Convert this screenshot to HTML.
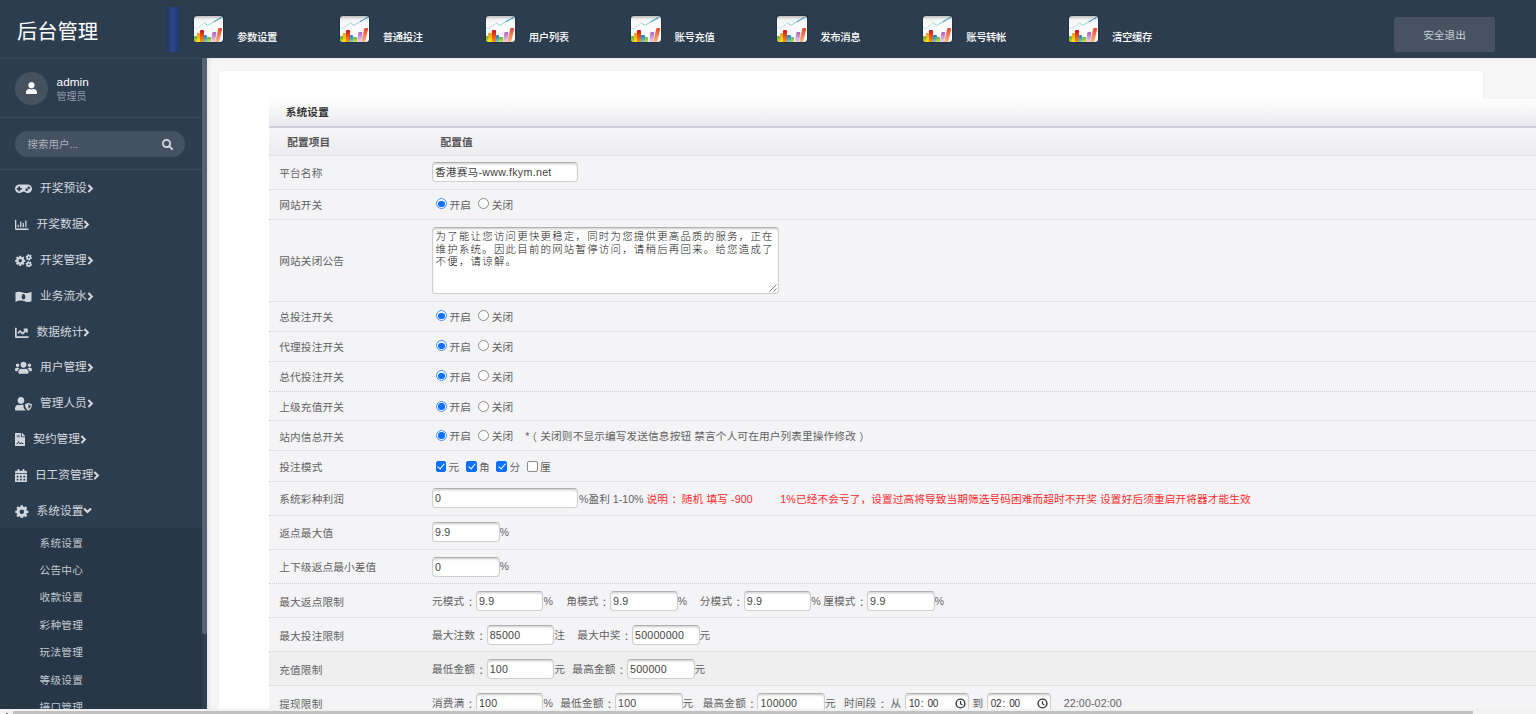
<!DOCTYPE html>
<html lang="zh-CN">
<head>
<meta charset="utf-8">
<title>后台管理</title>
<style>
*{box-sizing:border-box;margin:0;padding:0}
html,body{width:1536px;height:714px;overflow:hidden}
body{position:relative;background:#f6f6f7;font-family:"Liberation Sans","Noto Sans CJK SC",sans-serif;font-size:10.67px;color:#555}
/* ---------- header ---------- */
#hdr{position:absolute;left:0;top:0;width:1536px;height:58px;background:#2d3d50;z-index:5}
#brand{position:absolute;left:17px;top:17px;font-size:20.3px;line-height:30px;color:#fff;white-space:nowrap}
#bluebar{position:absolute;left:166.5px;top:6.5px;width:12.5px;height:45.5px;background:linear-gradient(90deg,#1d3565 0%,#2a4a86 45%,#1f3a70 100%)}
.tn{position:absolute;top:13.8px;height:30px;white-space:nowrap}
.ic{position:absolute;left:2px;top:2px;width:29.2px;height:26.2px;border-radius:3.2px;overflow:hidden;background:linear-gradient(#bdbdbd 0,#f3f3f3 14%,#fbfbfb 30%,#fafafa 100%);box-shadow:0 0 0 1.1px rgba(30,44,62,.55)}
.ic svg{position:absolute;left:0;top:0}
.ic i{position:absolute;bottom:-1px;border-radius:1.2px 1.2px 0 0}
.ic .b1{left:0;width:2.9px;height:6.9px;background:linear-gradient(#4fa63c,#e9e21e)}
.ic .b2{left:2.7px;width:3.4px;height:10.1px;background:linear-gradient(#f2931e,#fff200)}
.ic .b3{left:5.9px;width:4.1px;height:12.7px;background:linear-gradient(#d40f18,#f6a01e)}
.ic .b4{left:10px;width:3.4px;height:8.2px;background:linear-gradient(#1674c4,#7fe0cf)}
.ic .b5{left:13.3px;width:3.7px;height:6.1px;background:linear-gradient(#52b043,#f4ea3a)}
.ic .b6{left:17.3px;width:3.5px;height:11.2px;background:linear-gradient(#ae5fbd,#f6dcec);transform:skewX(-7deg);transform-origin:50% 100%}
.ic .b7{left:21.3px;width:4.2px;height:15.2px;background:linear-gradient(#e6452a,#fbc08c);transform:skewX(-12.5deg);transform-origin:50% 100%}
.tn span{position:absolute;left:45px;top:17px;font-size:10.4px;line-height:14px;font-weight:500;color:#fff;letter-spacing:-.4px}
#logout{position:absolute;left:1394px;top:17px;width:101px;height:35px;border-radius:3px;background:#475363;color:#c9ced6;font-size:10.67px;line-height:37px;text-align:center}
/* ---------- sidebar ---------- */
#side{position:absolute;left:0;top:58px;width:201.6px;height:651px;background:#2d3d50;overflow:hidden;z-index:4}
#sbar{position:absolute;left:201.6px;top:58px;width:5px;height:651px;background:#2f3e51;z-index:4}
#sbar i{position:absolute;left:0;top:0;width:5px;height:576px;background:#566276;border-radius:0 0 2px 2px}
#user{position:absolute;left:0;top:0;width:202px;height:60px;border-top:1px solid #364659;border-bottom:1px solid #3c4b5d}
#ava{position:absolute;left:15px;top:13px;width:33px;height:33px;border-radius:50%;background:#46525f}
#uname{position:absolute;left:56.6px;top:16px;font-size:11.8px;line-height:14px;color:#fff}
#urole{position:absolute;left:56.6px;top:30.5px;font-size:10px;line-height:13px;color:#8f9bab}
#search{position:absolute;left:15px;top:73px;width:170px;height:26px;border-radius:13px;background:#455263}
#search span{position:absolute;left:12.5px;top:6px;font-size:10.5px;line-height:14px;color:#a9b1bc}
#sline{position:absolute;left:0;top:111px;width:202px;height:1px;background:#3c4b5d}
.mi{position:absolute;left:0;width:202px;height:20px;color:#d2d7de;font-size:11.7px;line-height:20px;white-space:nowrap}
.mi svg{position:absolute;left:15px;top:4px;fill:#d2d7de}
.mi span{position:absolute;top:0}
.mi .cv{display:inline-block;position:relative;left:0;top:1px;margin-left:0}
#sub{position:absolute;left:0;top:470px;width:202px;height:190px;background:#283748}
.si{position:absolute;left:39.6px;letter-spacing:.2px;font-size:10.67px;line-height:16px;color:#c3c9d1;white-space:nowrap}
/* ---------- main ---------- */
#card{position:absolute;left:219px;top:71px;width:1264px;height:660px;background:#fff;border-radius:3px;box-shadow:0 0 2px rgba(0,0,0,.06)}
#tbl{letter-spacing:.12px;position:absolute;left:269px;top:99px;width:1290px;height:640px;background:#f4f4f6}
.tt{position:absolute;left:0;top:0;width:100%;height:29px;border-bottom:2px solid #cdcedb;background:linear-gradient(#fff,#e9e9ee);padding-left:16.8px;font-weight:bold;color:#333;line-height:27.5px;font-size:10.67px}
.th{position:absolute;left:0;top:29px;width:100%;height:28px;border-bottom:1px dotted #cfcfd3;background:linear-gradient(#f7f7f9,#ececf0);display:flex;align-items:center;font-weight:bold;color:#555}
.th .k{padding-left:18.2px!important}
.th .v{padding-left:8.5px}
.r{position:absolute;left:0;width:100%;display:flex;align-items:center;border-bottom:1px dotted #cfcfd3;white-space:nowrap;color:#626262}
.r.hv{background:#efefef}
.k{width:163px;flex:none;padding-left:10.3px;line-height:14px}
.v{flex:none;line-height:20px}
.v>*{vertical-align:middle}
.in{display:inline-block;height:19.8px;border:1px solid #cfcfcf;border-top-color:#b0b0b0;border-radius:4px;background:#fff;box-shadow:inset 0 1.5px 1.5px rgba(0,0,0,.16);padding-left:2px;line-height:19.2px;color:#444;overflow:hidden;position:relative;top:-1px;margin:0 0 0 .8px;letter-spacing:.2px}
.in.big{margin:0 1.5px 0 0}
.in.f{margin-left:0}
.in.d1{top:0}
.ta{display:inline-block;width:346.5px;height:66.5px;border:1px solid #cfcfcf;border-top-color:#b0b0b0;border-radius:4px;background:#fff;box-shadow:inset 0 1.5px 1.5px rgba(0,0,0,.16);padding:3px 0 0 2.6px;font-family:"Liberation Mono","Noto Sans CJK SC",monospace;font-weight:300;font-size:10.4px;letter-spacing:1.27px;line-height:12.5px;color:#111;position:relative}
.rsz{position:absolute;right:1px;bottom:1px}
.rd{display:inline-block;width:11.2px;height:11.2px;border-radius:50%;border:1px solid #8a8a8a;background:#fff;margin:0 2.4px 0 4px;position:relative;top:-1.8px}
.rd.on{border-color:#3f8dff}
.rd.on:after{content:"";position:absolute;left:1.35px;top:1.35px;width:6.5px;height:6.5px;border-radius:50%;background:#0a70ff}
.cb{display:inline-block;width:10.6px;height:10.6px;border-radius:2px;border:1px solid #8a8a8a;background:#fff;margin:0 2.4px 0 3.6px;position:relative;top:-1.9px}
.cb.on{border-color:#0a70ff;background:#0a70ff}
.cb.on:after{content:"";position:absolute;left:2.7px;top:.1px;width:3px;height:6px;border:solid #fff;border-width:0 1.8px 1.8px 0;transform:rotate(40deg)}
.red{color:#ff2a2a;letter-spacing:.1px}
.sp{display:inline-block;height:1px}
.co{position:relative;left:3.4px}
.in u{text-decoration:none;letter-spacing:.3px}
.pl{position:relative;left:-3.4px}
.pr{position:relative;left:3.4px}
.tm{font-size:10px;line-height:20.2px;padding-left:3.2px;margin:0;letter-spacing:-.35px;color:#333}
.tm b{font-weight:normal}
.tm b.c{display:inline-block;width:5.2px;text-align:center;margin-right:2.9px}
.ck{position:absolute;right:2.6px;top:3.4px}
#mshadow{position:absolute;left:206.6px;top:58px;width:5px;height:651px;background:linear-gradient(90deg,rgba(0,0,0,.07),rgba(0,0,0,0));z-index:3}
#hshadow{position:absolute;left:206.6px;top:58px;width:1330px;height:3px;background:linear-gradient(rgba(0,0,0,.05),rgba(0,0,0,0));z-index:3}
#hs{position:absolute;left:0;top:709px;width:1536px;height:5px;background:#f1f1f1;z-index:9}
#hs b{position:absolute;left:5.5px;top:4px;width:2px;height:1px;background:#666}
#hs i{position:absolute;left:12.5px;top:2px;width:1460px;height:3px;background:#c1c1c1}
</style>
</head>
<body>
<div id="hdr">
  <div class="tn" style="left:192.00px"><div class="ic"><svg width="29.5" height="26.2" viewBox="0 0 29.5 26.2"><path d="M0 11.4 L2.4 12.8 L10.4 7" fill="none" stroke="#bfe0e4" stroke-width="1"/><path d="M10.4 7 L13.8 9.4 L20 5.8" fill="none" stroke="#8fcbd9" stroke-width="1"/><path d="M20 5.8 L27.4 1.4" fill="none" stroke="#3f9cc6" stroke-width="1.1"/><path d="M25 2.2 L27.6 .9 L26.6 3 Z" fill="#3394c0"/></svg><i class="b1"></i><i class="b2"></i><i class="b3"></i><i class="b4"></i><i class="b5"></i><i class="b6"></i><i class="b7"></i></div><span>参数设置</span></div>
  <div class="tn" style="left:337.83px"><div class="ic"><svg width="29.5" height="26.2" viewBox="0 0 29.5 26.2"><path d="M0 11.4 L2.4 12.8 L10.4 7" fill="none" stroke="#bfe0e4" stroke-width="1"/><path d="M10.4 7 L13.8 9.4 L20 5.8" fill="none" stroke="#8fcbd9" stroke-width="1"/><path d="M20 5.8 L27.4 1.4" fill="none" stroke="#3f9cc6" stroke-width="1.1"/><path d="M25 2.2 L27.6 .9 L26.6 3 Z" fill="#3394c0"/></svg><i class="b1"></i><i class="b2"></i><i class="b3"></i><i class="b4"></i><i class="b5"></i><i class="b6"></i><i class="b7"></i></div><span>普通投注</span></div>
  <div class="tn" style="left:483.66px"><div class="ic"><svg width="29.5" height="26.2" viewBox="0 0 29.5 26.2"><path d="M0 11.4 L2.4 12.8 L10.4 7" fill="none" stroke="#bfe0e4" stroke-width="1"/><path d="M10.4 7 L13.8 9.4 L20 5.8" fill="none" stroke="#8fcbd9" stroke-width="1"/><path d="M20 5.8 L27.4 1.4" fill="none" stroke="#3f9cc6" stroke-width="1.1"/><path d="M25 2.2 L27.6 .9 L26.6 3 Z" fill="#3394c0"/></svg><i class="b1"></i><i class="b2"></i><i class="b3"></i><i class="b4"></i><i class="b5"></i><i class="b6"></i><i class="b7"></i></div><span>用户列表</span></div>
  <div class="tn" style="left:629.49px"><div class="ic"><svg width="29.5" height="26.2" viewBox="0 0 29.5 26.2"><path d="M0 11.4 L2.4 12.8 L10.4 7" fill="none" stroke="#bfe0e4" stroke-width="1"/><path d="M10.4 7 L13.8 9.4 L20 5.8" fill="none" stroke="#8fcbd9" stroke-width="1"/><path d="M20 5.8 L27.4 1.4" fill="none" stroke="#3f9cc6" stroke-width="1.1"/><path d="M25 2.2 L27.6 .9 L26.6 3 Z" fill="#3394c0"/></svg><i class="b1"></i><i class="b2"></i><i class="b3"></i><i class="b4"></i><i class="b5"></i><i class="b6"></i><i class="b7"></i></div><span>账号充值</span></div>
  <div class="tn" style="left:775.32px"><div class="ic"><svg width="29.5" height="26.2" viewBox="0 0 29.5 26.2"><path d="M0 11.4 L2.4 12.8 L10.4 7" fill="none" stroke="#bfe0e4" stroke-width="1"/><path d="M10.4 7 L13.8 9.4 L20 5.8" fill="none" stroke="#8fcbd9" stroke-width="1"/><path d="M20 5.8 L27.4 1.4" fill="none" stroke="#3f9cc6" stroke-width="1.1"/><path d="M25 2.2 L27.6 .9 L26.6 3 Z" fill="#3394c0"/></svg><i class="b1"></i><i class="b2"></i><i class="b3"></i><i class="b4"></i><i class="b5"></i><i class="b6"></i><i class="b7"></i></div><span>发布消息</span></div>
  <div class="tn" style="left:921.15px"><div class="ic"><svg width="29.5" height="26.2" viewBox="0 0 29.5 26.2"><path d="M0 11.4 L2.4 12.8 L10.4 7" fill="none" stroke="#bfe0e4" stroke-width="1"/><path d="M10.4 7 L13.8 9.4 L20 5.8" fill="none" stroke="#8fcbd9" stroke-width="1"/><path d="M20 5.8 L27.4 1.4" fill="none" stroke="#3f9cc6" stroke-width="1.1"/><path d="M25 2.2 L27.6 .9 L26.6 3 Z" fill="#3394c0"/></svg><i class="b1"></i><i class="b2"></i><i class="b3"></i><i class="b4"></i><i class="b5"></i><i class="b6"></i><i class="b7"></i></div><span>账号转帐</span></div>
  <div class="tn" style="left:1066.98px"><div class="ic"><svg width="29.5" height="26.2" viewBox="0 0 29.5 26.2"><path d="M0 11.4 L2.4 12.8 L10.4 7" fill="none" stroke="#bfe0e4" stroke-width="1"/><path d="M10.4 7 L13.8 9.4 L20 5.8" fill="none" stroke="#8fcbd9" stroke-width="1"/><path d="M20 5.8 L27.4 1.4" fill="none" stroke="#3f9cc6" stroke-width="1.1"/><path d="M25 2.2 L27.6 .9 L26.6 3 Z" fill="#3394c0"/></svg><i class="b1"></i><i class="b2"></i><i class="b3"></i><i class="b4"></i><i class="b5"></i><i class="b6"></i><i class="b7"></i></div><span>清空缓存</span></div>
  <div id="brand">后台管理</div>
  <div id="bluebar"></div>
  <div id="logout">安全退出</div>
</div>
<div id="side">
<div id="user"><div id="ava"><svg viewBox="0 0 448 512" width="10.94" height="12.50" style="position:absolute;left:11px;top:9.5px;fill:#fff"><path fill-rule="evenodd" d="M224 256c70.700 0 128-57.300 128-128S294.700 0 224 0 96 57.300 96 128s57.300 128 128 128zm89.600 32h-16.700c-22.200 10.200-46.900 16-72.900 16s-50.600-5.800-72.900-16h-16.700C60.200 288 0 348.200 0 422.400V464c0 26.500 21.500 48 48 48h352c26.500 0 48-21.500 48-48v-41.600c0-74.200-60.200-134.400-134.400-134.400z"/></svg></div><div id="uname">admin</div><div id="urole">管理员</div></div>
<div id="search"><span>搜索用户...</span><svg viewBox="0 0 512 512" width="11.20" height="11.20" style="position:absolute;left:146.5px;top:8px;fill:#d5dae0"><path fill-rule="evenodd" d="M505 442.700L405.300 343c-4.500-4.500-10.600-7-17-7H372c27.600-35.300 44-79.700 44-128C416 93.100 322.900 0 208 0S0 93.100 0 208s93.100 208 208 208c48.300 0 92.700-16.400 128-44v16.300c0 6.400 2.500 12.500 7 17l99.700 99.700c9.400 9.400 24.600 9.400 33.900 0l28.300-28.300c9.400-9.400 9.400-24.600.1-34zM208 336c-70.700 0-128-57.200-128-128 0-70.700 57.200-128 128-128 70.700 0 128 57.200 128 128 0 70.700-57.200 128-128 128z"/></svg></div>
<div id="sline"></div>
<div class="mi" style="top:120.3px"><svg viewBox="0 0 640 512" width="17.00" height="13.60" style=""><path fill-rule="evenodd" d="M480 96H160C71.6 96 0 167.6 0 256s71.6 160 160 160c44.800 0 85.200-18.400 114.200-48h91.500c29 29.600 69.500 48 114.200 48 88.400 0 160-71.600 160-160S568.400 96 480 96zM256 276c0 6.600-5.400 12-12 12h-52v52c0 6.600-5.400 12-12 12h-40c-6.600 0-12-5.400-12-12v-52H76c-6.600 0-12-5.400-12-12v-40c0-6.600 5.400-12 12-12h52v-52c0-6.600 5.400-12 12-12h40c6.600 0 12 5.400 12 12v52h52c6.600 0 12 5.400 12 12v40zm184 68c-26.500 0-48-21.500-48-48s21.500-48 48-48 48 21.500 48 48-21.500 48-48 48zm80-80c-26.500 0-48-21.500-48-48s21.500-48 48-48 48 21.500 48 48-21.500 48-48 48z"/></svg><span style="left:40.0px">开奖预设<svg class="cv" viewBox="0 0 8 10" width="7" height="9"><path d="M1.6 1 L5.6 5 L1.6 9" fill="none" stroke="#d5dae0" stroke-width="2.2"/></svg></span></div>
<div class="mi" style="top:156.1px"><svg viewBox="0 0 512 512" width="13.60" height="13.60" style=""><path fill-rule="evenodd" d="M396.800 352h22.400c6.400 0 12.800-6.400 12.800-12.800V108.800c0-6.400-6.400-12.800-12.800-12.800h-22.400c-6.400 0-12.800 6.400-12.800 12.800v230.400c0 6.400 6.400 12.800 12.800 12.800zm-192 0h22.400c6.400 0 12.800-6.400 12.800-12.800V140.800c0-6.400-6.400-12.800-12.800-12.800h-22.400c-6.400 0-12.800 6.400-12.800 12.800v198.400c0 6.400 6.400 12.800 12.800 12.800zm96 0h22.400c6.400 0 12.800-6.400 12.800-12.800V204.800c0-6.400-6.400-12.800-12.800-12.800h-22.400c-6.400 0-12.800 6.400-12.800 12.800v134.400c0 6.400 6.400 12.800 12.800 12.800zM496 400H48V80c0-8.840-7.160-16-16-16H16C7.160 64 0 71.160 0 80v336c0 17.670 14.330 32 32 32h464c8.840 0 16-7.160 16-16v-16c0-8.840-7.160-16-16-16zm-387.200-48h22.400c6.400 0 12.800-6.400 12.800-12.800v-70.400c0-6.400-6.400-12.800-12.800-12.800h-22.400c-6.400 0-12.800 6.400-12.800 12.800v70.400c0 6.400 6.400 12.800 12.800 12.800z"/></svg><span style="left:36.6px">开奖数据<svg class="cv" viewBox="0 0 8 10" width="7" height="9"><path d="M1.6 1 L5.6 5 L1.6 9" fill="none" stroke="#d5dae0" stroke-width="2.2"/></svg></span></div>
<div class="mi" style="top:191.9px"><svg viewBox="0 0 640 512" width="17.00" height="13.60" style=""><path fill-rule="evenodd" d="M342.3 214.7 L389.0 221.8 L389.0 290.2 L342.3 297.3 L328.6 330.3 L356.6 368.3 L308.3 416.6 L270.3 388.6 L237.3 402.3 L230.2 449.0 L161.8 449.0 L154.7 402.3 L121.7 388.6 L83.7 416.6 L35.4 368.3 L63.4 330.3 L49.7 297.3 L3.0 290.2 L3.0 221.8 L49.7 214.7 L63.4 181.7 L35.4 143.7 L83.7 95.4 L121.7 123.4 L154.7 109.7 L161.8 63.0 L230.2 63.0 L237.3 109.7 L270.3 123.4 L308.3 95.4 L356.6 143.7 L328.6 181.7Z M132.0 256.0 a64.0 64.0 0 1 0 128.0 0 a64.0 64.0 0 1 0 -128.0 0Z M609.8 118.0 L641.7 132.1 L625.0 186.1 L590.7 179.6 L570.1 198.8 L573.9 233.5 L518.8 246.0 L507.2 213.1 L480.3 204.8 L452.1 225.4 L413.7 183.9 L436.4 157.4 L430.2 130.0 L398.3 115.9 L415.0 61.9 L449.3 68.4 L469.9 49.2 L466.1 14.5 L521.2 2.0 L532.8 34.9 L559.7 43.2 L587.9 22.6 L626.3 64.1 L603.6 90.6Z M486.0 124.0 a34.0 34.0 0 1 0 68.0 0 a34.0 34.0 0 1 0 -68.0 0Z M609.8 382.0 L641.7 396.1 L625.0 450.1 L590.7 443.6 L570.1 462.8 L573.9 497.5 L518.8 510.0 L507.2 477.1 L480.3 468.8 L452.1 489.4 L413.7 447.9 L436.4 421.4 L430.2 394.0 L398.3 379.9 L415.0 325.9 L449.3 332.4 L469.9 313.2 L466.1 278.5 L521.2 266.0 L532.8 298.9 L559.7 307.2 L587.9 286.6 L626.3 328.1 L603.6 354.6Z M486.0 388.0 a34.0 34.0 0 1 0 68.0 0 a34.0 34.0 0 1 0 -68.0 0Z"/></svg><span style="left:40.0px">开奖管理<svg class="cv" viewBox="0 0 8 10" width="7" height="9"><path d="M1.6 1 L5.6 5 L1.6 9" fill="none" stroke="#d5dae0" stroke-width="2.2"/></svg></span></div>
<div class="mi" style="top:227.7px"><svg viewBox="0 0 640 512" width="17.00" height="13.60" style=""><path fill-rule="evenodd" d="M18 92 C120 40 200 70 320 100 C440 130 520 110 622 62 L622 420 C520 472 440 442 320 412 C200 382 120 402 18 450Z M320 150 a70 106 0 1 0 .1 0Z"/></svg><span style="left:40.0px">业务流水<svg class="cv" viewBox="0 0 8 10" width="7" height="9"><path d="M1.6 1 L5.6 5 L1.6 9" fill="none" stroke="#d5dae0" stroke-width="2.2"/></svg></span></div>
<div class="mi" style="top:263.5px"><svg viewBox="0 0 512 512" width="13.60" height="13.60" style=""><path fill-rule="evenodd" d="M496 384H64V80c0-8.840-7.160-16-16-16H16C7.160 64 0 71.160 0 80v336c0 17.670 14.330 32 32 32h464c8.840 0 16-7.160 16-16v-32c0-8.840-7.160-16-16-16z M464 96H346c-21.400 0-32.100 25.900-17 41l32.400 32.400L288 242.800l-73.400-73.400c-12.500-12.500-32.800-12.500-45.300 0l-68.700 68.700c-6.200 6.200-6.200 16.400 0 22.600l22.600 22.600c6.200 6.200 16.400 6.200 22.600 0L192 237.300l73.400 73.400c12.500 12.500 32.800 12.500 45.300 0l96-96 32.400 32.400c15.100 15.100 41 4.400 41-17V112c0-8.800-7.200-16-16-16z"/></svg><span style="left:36.6px">数据统计<svg class="cv" viewBox="0 0 8 10" width="7" height="9"><path d="M1.6 1 L5.6 5 L1.6 9" fill="none" stroke="#d5dae0" stroke-width="2.2"/></svg></span></div>
<div class="mi" style="top:299.3px"><svg viewBox="0 0 640 512" width="17.00" height="13.60" style=""><path fill-rule="evenodd" d="M96 224c35.300 0 64-28.700 64-64s-28.700-64-64-64-64 28.700-64 64 28.700 64 64 64zm448 0c35.300 0 64-28.700 64-64s-28.700-64-64-64-64 28.700-64 64 28.700 64 64 64zm32 32h-64c-17.600 0-33.500 7.100-45.100 18.600 40.300 22.100 68.900 62 75.100 109.400h66c17.700 0 32-14.300 32-32v-32c0-35.300-28.700-64-64-64zm-256 0c61.900 0 112-50.100 112-112S381.900 32 320 32 208 82.100 208 144s50.100 112 112 112zm76.800 32h-8.300c-20.800 10-43.900 16-68.500 16s-47.600-6-68.500-16h-8.300C179.600 288 128 339.600 128 403.200V432c0 26.500 21.500 48 48 48h288c26.500 0 48-21.500 48-48v-28.800c0-63.600-51.600-115.200-115.200-115.200zm-223.700-13.400C161.500 263.100 145.600 256 128 256H64c-35.300 0-64 28.700-64 64v32c0 17.700 14.300 32 32 32h65.900c6.300-47.400 34.900-87.300 75.200-109.400z"/></svg><span style="left:40.0px">用户管理<svg class="cv" viewBox="0 0 8 10" width="7" height="9"><path d="M1.6 1 L5.6 5 L1.6 9" fill="none" stroke="#d5dae0" stroke-width="2.2"/></svg></span></div>
<div class="mi" style="top:335.1px"><svg viewBox="0 0 640 512" width="17.00" height="13.60" style=""><path fill-rule="evenodd" d="M224 256c70.700 0 128-57.300 128-128S294.700 0 224 0 96 57.300 96 128s57.300 128 128 128z M320 370 V300 c-8-6-30-12-42-12 h-16.700 c-22.200 10.200-46.900 16-73 16 s-50.600-5.800-73-16 H134.400 C60.200 288 0 348.200 0 422.400 V464 c0 26.500 21.500 48 48 48 h352 c4 0 8-1 12-2 C360 470 322 430 320 370z M622 262 l-106-40 c-6-2.500-12-2.500-18 0 l-106 40 c-9 4-14 12-14 22 c0 100 46 180 118 226 c8 4 14 4 22 0 c72-46 118-126 118-226 c0-10-5-18-14-22z M506 450 V280 l84 32 c-4 62-36 112-84 138z"/></svg><span style="left:40.0px">管理人员<svg class="cv" viewBox="0 0 8 10" width="7" height="9"><path d="M1.6 1 L5.6 5 L1.6 9" fill="none" stroke="#d5dae0" stroke-width="2.2"/></svg></span></div>
<div class="mi" style="top:370.9px"><svg viewBox="0 0 384 512" width="10.20" height="13.60" style=""><path fill-rule="evenodd" d="M224 136V0H24C10.700 0 0 10.700 0 24v464c0 13.300 10.700 24 24 24h336c13.300 0 24-10.700 24-24V160H248c-13.200 0-24-10.800-24-24z M64 72 h120 v20 H64z M64 136 h120 v20 H64z M60 400 C100 400 110 300 130 300 C150 300 150 380 190 380 C215 380 215 350 235 350 C255 350 255 384 320 384 L320 416 C240 416 235 384 235 384 C225 410 210 416 190 416 C150 416 140 370 130 350 C120 390 100 432 60 432Z M377 105L279.100 7c-4.500-4.500-10.600-7-17-7H256v128h128v-6.100c0-6.300-2.500-12.400-7-16.900z"/></svg><span style="left:33.2px">契约管理<svg class="cv" viewBox="0 0 8 10" width="7" height="9"><path d="M1.6 1 L5.6 5 L1.6 9" fill="none" stroke="#d5dae0" stroke-width="2.2"/></svg></span></div>
<div class="mi" style="top:406.7px"><svg viewBox="0 0 448 512" width="11.90" height="13.60" style=""><path fill-rule="evenodd" d="M0 464c0 26.500 21.500 48 48 48h352c26.500 0 48-21.500 48-48V192H0v272z M64 256 h64 v64 H64z M192 256 h64 v64 h-64z M320 256 h64 v64 h-64z M64 368 h64 v64 H64z M192 368 h64 v64 h-64z M320 368 h64 v64 h-64z M400 64h-48V16c0-8.800-7.200-16-16-16h-32c-8.800 0-16 7.200-16 16v48H160V16c0-8.800-7.200-16-16-16h-32c-8.800 0-16 7.200-16 16v48H48C21.500 64 0 85.500 0 112v48h448v-48c0-26.500-21.500-48-48-48z"/></svg><span style="left:34.9px">日工资管理<svg class="cv" viewBox="0 0 8 10" width="7" height="9"><path d="M1.6 1 L5.6 5 L1.6 9" fill="none" stroke="#d5dae0" stroke-width="2.2"/></svg></span></div>
<div class="mi" style="top:442.5px"><svg viewBox="0 0 512 512" width="13.60" height="13.60" style=""><path fill-rule="evenodd" d="M442.7 203.3 L502.2 212.4 L502.2 299.6 L442.7 308.7 L425.3 350.8 L460.9 399.2 L399.2 460.9 L350.8 425.3 L308.7 442.7 L299.6 502.2 L212.4 502.2 L203.3 442.7 L161.2 425.3 L112.8 460.9 L51.1 399.2 L86.7 350.8 L69.3 308.7 L9.8 299.6 L9.8 212.4 L69.3 203.3 L86.7 161.2 L51.1 112.8 L112.8 51.1 L161.2 86.7 L203.3 69.3 L212.4 9.8 L299.6 9.8 L308.7 69.3 L350.8 86.7 L399.2 51.1 L460.9 112.8 L425.3 161.2Z M172.0 256.0 a84.0 84.0 0 1 0 168.0 0 a84.0 84.0 0 1 0 -168.0 0Z"/></svg><span style="left:36.6px">系统设置<svg class="cv" viewBox="0 0 10 8" width="9" height="7" style="top:-.5px"><path d="M1 1.8 L5 5.8 L9 1.8" fill="none" stroke="#d5dae0" stroke-width="2.4"/></svg></span></div>
<div id="sub">
<div class="si" style="top:6.5px">系统设置</div>
<div class="si" style="top:33.9px">公告中心</div>
<div class="si" style="top:61.3px">收款设置</div>
<div class="si" style="top:88.7px">彩种管理</div>
<div class="si" style="top:116.1px">玩法管理</div>
<div class="si" style="top:143.5px">等级设置</div>
<div class="si" style="top:170.9px">接口管理</div>
</div>
</div>
<div id="sbar"><i></i></div>
<div id="mshadow"></div><div id="hshadow"></div>
<div id="card"></div>
<div id="tbl">
<div class="tt">系统设置</div>
<div class="th"><div class="k">配置项目</div><div class="v">配置值</div></div>
<div class="r " style="top:57px;height:34px;padding-top:0px"><div class="k">平台名称</div><div class="v"><span class="in big" style="width:145.5px">香港赛马<u>-www.fkym.net</u></span></div></div>
<div class="r " style="top:91px;height:30px;padding-top:0px"><div class="k">网站开关</div><div class="v"><i class="rd on"></i>开启 <i class="rd"></i>关闭</div></div>
<div class="r " style="top:121px;height:82px;padding-top:0px"><div class="k">网站关闭公告</div><div class="v"><span class="ta">为了能让您访问更快更稳定，同时为您提供更高品质的服务，正在<br>维护系统。因此目前的网站暂停访问，请稍后再回来。给您造成了<br>不便，请谅解。<svg class="rsz" width="8" height="8" viewBox="0 0 8 8"><path d="M7.5 .5 L.5 7.5 M7.5 4.5 L4.5 7.5" stroke="#777" stroke-width="1" fill="none"/></svg></span></div></div>
<div class="r " style="top:203px;height:30px;padding-top:0px"><div class="k">总投注开关</div><div class="v"><i class="rd on"></i>开启 <i class="rd"></i>关闭</div></div>
<div class="r " style="top:233px;height:30px;padding-top:0px"><div class="k">代理投注开关</div><div class="v"><i class="rd on"></i>开启 <i class="rd"></i>关闭</div></div>
<div class="r " style="top:263px;height:30px;padding-top:0px"><div class="k">总代投注开关</div><div class="v"><i class="rd on"></i>开启 <i class="rd"></i>关闭</div></div>
<div class="r " style="top:293px;height:29px;padding-top:2px"><div class="k">上级充值开关</div><div class="v"><i class="rd on"></i>开启 <i class="rd"></i>关闭</div></div>
<div class="r " style="top:322px;height:30px;padding-top:2px"><div class="k">站内信总开关</div><div class="v"><i class="rd on"></i>开启 <i class="rd"></i>关闭<i class="sp" style="width:11.9px"></i>*<span class="pl">（</span>关闭则不显示编写发送信息按钮 禁言个人可在用户列表里操作修改<span class="pr">）</span></div></div>
<div class="r " style="top:352px;height:31px;padding-top:2px"><div class="k">投注模式</div><div class="v"><i class="cb on"></i>元 <i class="cb on"></i>角 <i class="cb on"></i>分 <i class="cb"></i>厘</div></div>
<div class="r " style="top:383px;height:34px;padding-top:0px"><div class="k">系统彩种利润</div><div class="v"><span class="in big" style="width:145.5px">0</span><span style="letter-spacing:0">%盈利 1-10% </span><span class="red">说明<span class="co">：</span> 随机 填写 -900 &nbsp; &nbsp; &nbsp; &nbsp; 1%已经不会亏了，设置过高将导致当期筛选号码困难而超时不开奖 设置好后须重启开将器才能生效</span></div></div>
<div class="r " style="top:417px;height:34px;padding-top:0px"><div class="k">返点最大值</div><div class="v"><span class="in f" style="width:67.5px">9.9</span>%</div></div>
<div class="r " style="top:451px;height:34px;padding-top:0px"><div class="k">上下级返点最小差值</div><div class="v"><span class="in f d1" style="width:67.5px">0</span>%</div></div>
<div class="r " style="top:485px;height:34px;padding-top:2px"><div class="k">最大返点限制</div><div class="v">元模式<span class="co">：</span><span class="in " style="width:67.5px">9.9</span>%<i class="sp" style="width:13.1px"></i>角模式<span class="co">：</span><span class="in " style="width:67.5px">9.9</span>%<i class="sp" style="width:12.7px"></i>分模式<span class="co">：</span><span class="in " style="width:67.5px">9.9</span>%<i class="sp" style="width:2.3px"></i>厘模式<span class="co">：</span><span class="in " style="width:67.5px">9.9</span>%</div></div>
<div class="r " style="top:519px;height:34px;padding-top:2px"><div class="k">最大投注限制</div><div class="v">最大注数<span class="co">：</span><span class="in " style="width:67.5px">85000</span>注<i class="sp" style="width:12.4px"></i>最大中奖<span class="co">：</span><span class="in " style="width:67.5px">50000000</span>元</div></div>
<div class="r hv" style="top:553px;height:34px;padding-top:2px"><div class="k">充值限制</div><div class="v">最低金额<span class="co">：</span><span class="in " style="width:67.5px">100</span>元<i class="sp" style="width:7.4px"></i>最高金额<span class="co">：</span><span class="in " style="width:67.5px">500000</span>元</div></div>
<div class="r " style="top:587px;height:34px;padding-top:2px"><div class="k">提现限制</div><div class="v">消费满<span class="co">：</span><span class="in " style="width:67.5px">100</span>%<i class="sp" style="width:7.3px"></i>最低金额<span class="co">：</span><span class="in " style="width:67.5px">100</span>元<i class="sp" style="width:9.5px"></i>最高金额<span class="co">：</span><span class="in " style="width:67.5px">100000</span>元<i class="sp" style="width:8.2px"></i>时间段<span class="co">：</span><i class="sp" style="width:3.5px"></i>从<i class="sp" style="width:3.4px"></i><span class="in tm" style="width:64.7px"><b>10</b><b class="c">:</b><b>00</b><svg class="ck" width="11" height="11" viewBox="0 0 11 11"><circle cx="5.5" cy="5.5" r="4.4" fill="none" stroke="#333" stroke-width="1.4"/><path d="M5.5 2.9 V5.7 L7.4 6.9" fill="none" stroke="#333" stroke-width="1.2"/></svg></span><i class="sp" style="width:3px"></i>到<i class="sp" style="width:3.4px"></i><span class="in tm" style="width:64.7px"><b>02</b><b class="c">:</b><b>00</b><svg class="ck" width="11" height="11" viewBox="0 0 11 11"><circle cx="5.5" cy="5.5" r="4.4" fill="none" stroke="#333" stroke-width="1.4"/><path d="M5.5 2.9 V5.7 L7.4 6.9" fill="none" stroke="#333" stroke-width="1.2"/></svg></span><i class="sp" style="width:12.4px"></i>22:00-02:00</div></div>
</div>
<div id="hs"><i></i><b></b></div>
</body>
</html>
